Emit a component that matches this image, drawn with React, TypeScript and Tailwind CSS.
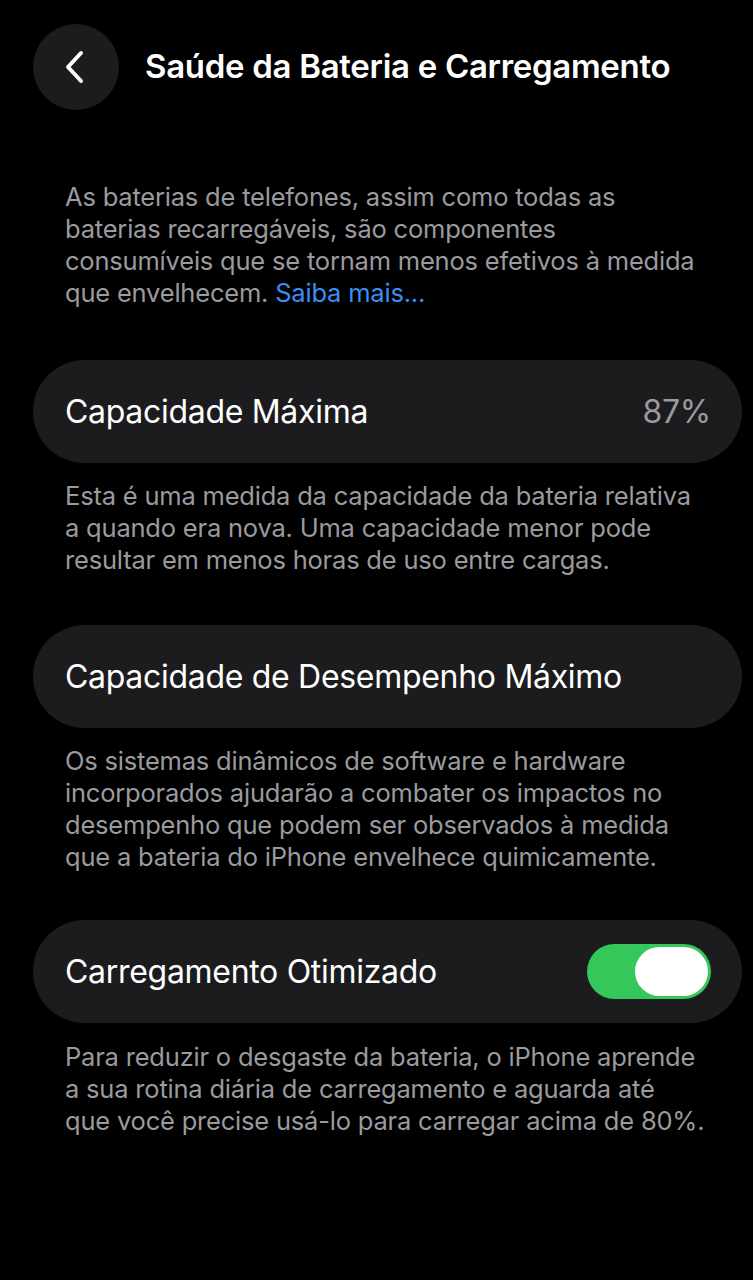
import React from "react";

const font = { fontFamily: "Inter, 'Noto Sans', sans-serif" };

function Row({ children }: { children: React.ReactNode }) {
  return (
    <div className="ml-[33px] mr-[11px] flex h-[103px] items-center justify-between rounded-[52px] bg-[#1c1c1e] pl-[32px] pr-[31px]">
      {children}
    </div>
  );
}

function Note({ lines, className = "" }: { lines: React.ReactNode[]; className?: string }) {
  return (
    <p className={`ml-[65px] whitespace-nowrap text-[25.5px] leading-[32px] tracking-[-0.2px] text-[#9a9a9f] ${className}`}>
      {lines.map((l, i) => (
        <span key={i} className="block">
          {l}
        </span>
      ))}
    </p>
  );
}

export default function App() {
  return (
    <div className="min-h-[1280px] w-[753px] overflow-hidden bg-black pt-[24px] text-white" style={font}>
      <header className="flex items-center">
        <button className="ml-[33px] flex h-[86px] w-[86px] items-center justify-center rounded-full bg-[#1c1c1e]">
          <svg width="30" height="36" viewBox="0 0 30 36" fill="none">
            <path d="M20 4 L7 18 L20 32" stroke="white" strokeWidth="4" strokeLinecap="round" strokeLinejoin="round" />
          </svg>
        </button>
        <h1 className="ml-[26px] text-[33px] font-semibold tracking-[-0.3px]">Saúde da Bateria e Carregamento</h1>
      </header>

      <Note
        className="mt-[71px]"
        lines={[
          "As baterias de telefones, assim como todas as",
          "baterias recarregáveis, são componentes",
          "consumíveis que se tornam menos efetivos à medida",
          <>
            que envelhecem. <span className="text-[#3a8ff5]">Saiba mais...</span>
          </>,
        ]}
      />

      <div className="mt-[51px]">
        <Row>
          <span className="text-[32px] tracking-[-0.3px]">Capacidade Máxima</span>
          <span className="text-[32px] tracking-[-0.3px] text-[#9a9a9f]">87%</span>
        </Row>
      </div>

      <Note
        className="mt-[17px]"
        lines={[
          "Esta é uma medida da capacidade da bateria relativa",
          "a quando era nova. Uma capacidade menor pode",
          "resultar em menos horas de uso entre cargas.",
        ]}
      />

      <div className="mt-[49px]">
        <Row>
          <span className="text-[32px] tracking-[-0.3px]">Capacidade de Desempenho Máximo</span>
        </Row>
      </div>

      <Note
        className="mt-[17px]"
        lines={[
          "Os sistemas dinâmicos de software e hardware",
          "incorporados ajudarão a combater os impactos no",
          "desempenho que podem ser observados à medida",
          "que a bateria do iPhone envelhece quimicamente.",
        ]}
      />

      <div className="mt-[47px]">
        <Row>
          <span className="text-[32px] tracking-[-0.3px]">Carregamento Otimizado</span>
          <div className="flex h-[55px] w-[124px] items-center justify-end rounded-full bg-[#34c759] px-[3px]">
            <div className="h-[49px] w-[73px] rounded-full bg-white" />
          </div>
        </Row>
      </div>

      <Note
        className="mt-[18px]"
        lines={[
          "Para reduzir o desgaste da bateria, o iPhone aprende",
          "a sua rotina diária de carregamento e aguarda até",
          "que você precise usá-lo para carregar acima de 80%.",
        ]}
      />
    </div>
  );
}
